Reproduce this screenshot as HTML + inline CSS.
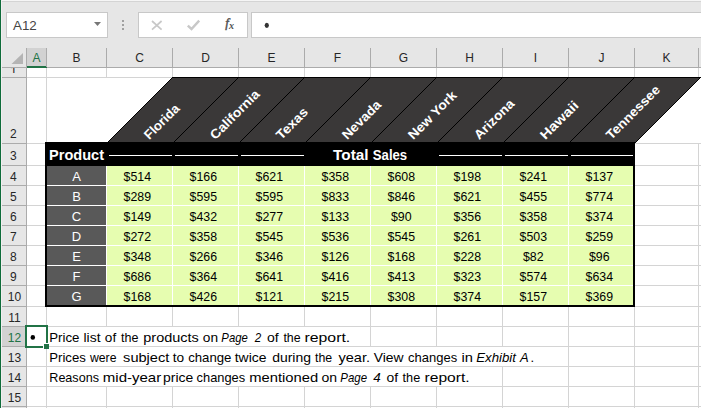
<!DOCTYPE html>
<html><head><meta charset="utf-8"><title>Sheet</title>
<style>
html,body{margin:0;padding:0;background:#fff;overflow:hidden}
svg{display:block}
svg rect,svg polygon.c{shape-rendering:crispEdges}
text{white-space:pre}
</style></head><body>
<svg width="701" height="408" viewBox="0 0 701 408">
<rect x="0" y="0" width="701" height="408" fill="#e6e6e6" />
<rect x="0" y="0" width="701" height="1" fill="#f5f5f5" />
<rect x="0" y="1" width="701" height="1" fill="#d4d4d4" />
<rect x="27" y="68" width="674" height="340" fill="#ffffff" />
<rect x="0" y="0" width="1" height="408" fill="#0f6c3a" />
<rect x="1" y="0" width="1" height="408" fill="#f2eef0" />
<rect x="6.5" y="12.5" width="101" height="25" fill="#ffffff" stroke="#c8c8c8" stroke-width="1"/>
<rect x="138.5" y="12.5" width="109" height="25" fill="#ffffff" stroke="#c8c8c8" stroke-width="1"/>
<rect x="251.5" y="12.5" width="460" height="25" fill="#ffffff" stroke="#c8c8c8" stroke-width="1"/>
<polygon points="94,22 101,22 97.5,26" fill="#777777"/>
<rect x="122" y="20.25" width="1.5" height="1.5" fill="#a0a0a0" />
<rect x="122" y="24.25" width="1.5" height="1.5" fill="#a0a0a0" />
<rect x="122" y="28.25" width="1.5" height="1.5" fill="#a0a0a0" />
<path d="M152 21 L161.6 29.6 M161.6 21 L152 29.6" stroke="#c8c8c8" stroke-width="1.7" fill="none"/>
<path d="M187.8 25.6 L191.5 29 L199.2 20.6" stroke="#c8c8c8" stroke-width="2.4" fill="none"/>
<text x="225.3" y="27.4" font-family="&quot;Liberation Serif&quot;, serif" font-style="italic" font-size="13" fill="#505050" stroke="#505050" stroke-width="0.45">f</text>
<text x="229" y="28.8" font-family="&quot;Liberation Serif&quot;, serif" font-style="italic" font-weight="bold" font-size="10" fill="#505050">x</text>
<ellipse cx="266.8" cy="25.3" rx="2.1" ry="2.6" fill="#333333"/>
<text id="t_a12" x="13.06" y="29.8" font-family='"Liberation Sans", sans-serif' font-size="12" font-weight="normal" font-style="normal" fill="#444444" text-anchor="start" textLength="23.73" lengthAdjust="spacingAndGlyphs">A12</text>
<rect x="27" y="48" width="19" height="19" fill="#d2d2d2" />
<rect x="2" y="67" width="699" height="1" fill="#ababab" />
<rect x="27" y="66" width="20" height="2" fill="#217346" />
<rect x="26" y="48" width="1" height="19" fill="#ababab" />
<rect x="46" y="48" width="1" height="19" fill="#ababab" />
<rect x="106" y="48" width="1" height="19" fill="#ababab" />
<rect x="172" y="48" width="1" height="19" fill="#ababab" />
<rect x="238" y="48" width="1" height="19" fill="#ababab" />
<rect x="304" y="48" width="1" height="19" fill="#ababab" />
<rect x="370" y="48" width="1" height="19" fill="#ababab" />
<rect x="436" y="48" width="1" height="19" fill="#ababab" />
<rect x="502" y="48" width="1" height="19" fill="#ababab" />
<rect x="568" y="48" width="1" height="19" fill="#ababab" />
<rect x="634" y="48" width="1" height="19" fill="#ababab" />
<rect x="698" y="48" width="1" height="19" fill="#ababab" />
<text x="36.5" y="62" text-anchor="middle" font-family='"Liberation Sans", sans-serif' font-size="12" fill="#217346">A</text>
<text x="76.5" y="62" text-anchor="middle" font-family='"Liberation Sans", sans-serif' font-size="12" fill="#262626">B</text>
<text x="139.5" y="62" text-anchor="middle" font-family='"Liberation Sans", sans-serif' font-size="12" fill="#262626">C</text>
<text x="205.5" y="62" text-anchor="middle" font-family='"Liberation Sans", sans-serif' font-size="12" fill="#262626">D</text>
<text x="271.5" y="62" text-anchor="middle" font-family='"Liberation Sans", sans-serif' font-size="12" fill="#262626">E</text>
<text x="337.5" y="62" text-anchor="middle" font-family='"Liberation Sans", sans-serif' font-size="12" fill="#262626">F</text>
<text x="403.5" y="62" text-anchor="middle" font-family='"Liberation Sans", sans-serif' font-size="12" fill="#262626">G</text>
<text x="469.5" y="62" text-anchor="middle" font-family='"Liberation Sans", sans-serif' font-size="12" fill="#262626">H</text>
<text x="535.5" y="62" text-anchor="middle" font-family='"Liberation Sans", sans-serif' font-size="12" fill="#262626">I</text>
<text x="601.5" y="62" text-anchor="middle" font-family='"Liberation Sans", sans-serif' font-size="12" fill="#262626">J</text>
<text x="666.5" y="62" text-anchor="middle" font-family='"Liberation Sans", sans-serif' font-size="12" fill="#262626">K</text>
<polygon points="23,53 23,64 11.5,64" fill="#b4b4b4"/>
<rect x="26" y="68" width="1" height="340" fill="#ababab" />
<rect x="2" y="327" width="24" height="19" fill="#d2d2d2" />
<rect x="2" y="77" width="24" height="1" fill="#ababab" />
<rect x="2" y="143" width="24" height="1" fill="#ababab" />
<rect x="2" y="165" width="24" height="1" fill="#ababab" />
<rect x="2" y="185" width="24" height="1" fill="#ababab" />
<rect x="2" y="205" width="24" height="1" fill="#ababab" />
<rect x="2" y="225" width="24" height="1" fill="#ababab" />
<rect x="2" y="245" width="24" height="1" fill="#ababab" />
<rect x="2" y="265" width="24" height="1" fill="#ababab" />
<rect x="2" y="285" width="24" height="1" fill="#ababab" />
<rect x="2" y="306" width="24" height="1" fill="#ababab" />
<rect x="2" y="326" width="24" height="1" fill="#ababab" />
<rect x="2" y="346" width="24" height="1" fill="#ababab" />
<rect x="2" y="366" width="24" height="1" fill="#ababab" />
<rect x="2" y="386" width="24" height="1" fill="#ababab" />
<rect x="2" y="406" width="24" height="1" fill="#ababab" />
<clipPath id="cl1"><rect x="0" y="68" width="26" height="5"/></clipPath>
<text x="13.5" y="74.5" text-anchor="middle" font-family='"Liberation Sans", sans-serif' font-size="12" fill="#262626" clip-path="url(#cl1)">1</text>
<text x="13.4" y="137.7" text-anchor="middle" font-family='"Liberation Sans", sans-serif' font-size="12" fill="#262626">2</text>
<text x="13.4" y="159.8" text-anchor="middle" font-family='"Liberation Sans", sans-serif' font-size="12" fill="#262626">3</text>
<text x="13.4" y="180.5" text-anchor="middle" font-family='"Liberation Sans", sans-serif' font-size="12" fill="#262626">4</text>
<text x="13.4" y="200.5" text-anchor="middle" font-family='"Liberation Sans", sans-serif' font-size="12" fill="#262626">5</text>
<text x="13.4" y="220.5" text-anchor="middle" font-family='"Liberation Sans", sans-serif' font-size="12" fill="#262626">6</text>
<text x="13.4" y="240.5" text-anchor="middle" font-family='"Liberation Sans", sans-serif' font-size="12" fill="#262626">7</text>
<text x="13.4" y="260.5" text-anchor="middle" font-family='"Liberation Sans", sans-serif' font-size="12" fill="#262626">8</text>
<text x="13.4" y="280.5" text-anchor="middle" font-family='"Liberation Sans", sans-serif' font-size="12" fill="#262626">9</text>
<text x="14.4" y="300.5" text-anchor="middle" font-family='"Liberation Sans", sans-serif' font-size="12" fill="#262626">10</text>
<text x="14.4" y="321.5" text-anchor="middle" font-family='"Liberation Sans", sans-serif' font-size="12" fill="#262626">11</text>
<text x="14.4" y="341.5" text-anchor="middle" font-family='"Liberation Sans", sans-serif' font-size="12" fill="#217346">12</text>
<text x="14.4" y="361.5" text-anchor="middle" font-family='"Liberation Sans", sans-serif' font-size="12" fill="#262626">13</text>
<text x="14.4" y="381.5" text-anchor="middle" font-family='"Liberation Sans", sans-serif' font-size="12" fill="#262626">14</text>
<text x="14.4" y="401.5" text-anchor="middle" font-family='"Liberation Sans", sans-serif' font-size="12" fill="#262626">15</text>
<rect x="27" y="77" width="674" height="1" fill="#d4d4d4" />
<rect x="27" y="143" width="674" height="1" fill="#d4d4d4" />
<rect x="27" y="165" width="674" height="1" fill="#d4d4d4" />
<rect x="27" y="185" width="674" height="1" fill="#d4d4d4" />
<rect x="27" y="205" width="674" height="1" fill="#d4d4d4" />
<rect x="27" y="225" width="674" height="1" fill="#d4d4d4" />
<rect x="27" y="245" width="674" height="1" fill="#d4d4d4" />
<rect x="27" y="265" width="674" height="1" fill="#d4d4d4" />
<rect x="27" y="285" width="674" height="1" fill="#d4d4d4" />
<rect x="27" y="306" width="674" height="1" fill="#d4d4d4" />
<rect x="27" y="326" width="674" height="1" fill="#d4d4d4" />
<rect x="27" y="346" width="674" height="1" fill="#d4d4d4" />
<rect x="27" y="366" width="674" height="1" fill="#d4d4d4" />
<rect x="27" y="386" width="674" height="1" fill="#d4d4d4" />
<rect x="27" y="406" width="674" height="1" fill="#d4d4d4" />
<rect x="46" y="68" width="1" height="340" fill="#d4d4d4" />
<rect x="106" y="68" width="1" height="340" fill="#d4d4d4" />
<rect x="172" y="68" width="1" height="340" fill="#d4d4d4" />
<rect x="238" y="68" width="1" height="340" fill="#d4d4d4" />
<rect x="304" y="68" width="1" height="340" fill="#d4d4d4" />
<rect x="370" y="68" width="1" height="340" fill="#d4d4d4" />
<rect x="436" y="68" width="1" height="340" fill="#d4d4d4" />
<rect x="502" y="68" width="1" height="340" fill="#d4d4d4" />
<rect x="568" y="68" width="1" height="340" fill="#d4d4d4" />
<rect x="634" y="68" width="1" height="340" fill="#d4d4d4" />
<rect x="698" y="68" width="1" height="340" fill="#d4d4d4" />
<rect x="106" y="78" width="1" height="65" fill="#ffffff" />
<rect x="698" y="78" width="1" height="65" fill="#ffffff" />
<rect x="106" y="327" width="1" height="19" fill="#ffffff" />
<rect x="172" y="327" width="1" height="19" fill="#ffffff" />
<rect x="238" y="327" width="1" height="19" fill="#ffffff" />
<rect x="304" y="327" width="1" height="19" fill="#ffffff" />
<rect x="106" y="347" width="1" height="19" fill="#ffffff" />
<rect x="172" y="347" width="1" height="19" fill="#ffffff" />
<rect x="238" y="347" width="1" height="19" fill="#ffffff" />
<rect x="304" y="347" width="1" height="19" fill="#ffffff" />
<rect x="370" y="347" width="1" height="19" fill="#ffffff" />
<rect x="436" y="347" width="1" height="19" fill="#ffffff" />
<rect x="502" y="347" width="1" height="19" fill="#ffffff" />
<rect x="106" y="367" width="1" height="19" fill="#ffffff" />
<rect x="172" y="367" width="1" height="19" fill="#ffffff" />
<rect x="238" y="367" width="1" height="19" fill="#ffffff" />
<rect x="304" y="367" width="1" height="19" fill="#ffffff" />
<rect x="370" y="367" width="1" height="19" fill="#ffffff" />
<rect x="436" y="367" width="1" height="19" fill="#ffffff" />
<polygon points="107,143 635,143 701,77 173,77" fill="#3a3838"/>
<rect x="172" y="77" width="529" height="1" fill="#000000" />
<path d="M107 142h1v1h-1zM108 141h1v1h-1zM109 140h1v1h-1zM110 139h1v1h-1zM111 138h1v1h-1zM112 137h1v1h-1zM113 136h1v1h-1zM114 135h1v1h-1zM115 134h1v1h-1zM116 133h1v1h-1zM117 132h1v1h-1zM118 131h1v1h-1zM119 130h1v1h-1zM120 129h1v1h-1zM121 128h1v1h-1zM122 127h1v1h-1zM123 126h1v1h-1zM124 125h1v1h-1zM125 124h1v1h-1zM126 123h1v1h-1zM127 122h1v1h-1zM128 121h1v1h-1zM129 120h1v1h-1zM130 119h1v1h-1zM131 118h1v1h-1zM132 117h1v1h-1zM133 116h1v1h-1zM134 115h1v1h-1zM135 114h1v1h-1zM136 113h1v1h-1zM137 112h1v1h-1zM138 111h1v1h-1zM139 110h1v1h-1zM140 109h1v1h-1zM141 108h1v1h-1zM142 107h1v1h-1zM143 106h1v1h-1zM144 105h1v1h-1zM145 104h1v1h-1zM146 103h1v1h-1zM147 102h1v1h-1zM148 101h1v1h-1zM149 100h1v1h-1zM150 99h1v1h-1zM151 98h1v1h-1zM152 97h1v1h-1zM153 96h1v1h-1zM154 95h1v1h-1zM155 94h1v1h-1zM156 93h1v1h-1zM157 92h1v1h-1zM158 91h1v1h-1zM159 90h1v1h-1zM160 89h1v1h-1zM161 88h1v1h-1zM162 87h1v1h-1zM163 86h1v1h-1zM164 85h1v1h-1zM165 84h1v1h-1zM166 83h1v1h-1zM167 82h1v1h-1zM168 81h1v1h-1zM169 80h1v1h-1zM170 79h1v1h-1zM171 78h1v1h-1zM172 77h1v1h-1z" fill="#000000" shape-rendering="crispEdges"/>
<path d="M173 142h1v1h-1zM174 141h1v1h-1zM175 140h1v1h-1zM176 139h1v1h-1zM177 138h1v1h-1zM178 137h1v1h-1zM179 136h1v1h-1zM180 135h1v1h-1zM181 134h1v1h-1zM182 133h1v1h-1zM183 132h1v1h-1zM184 131h1v1h-1zM185 130h1v1h-1zM186 129h1v1h-1zM187 128h1v1h-1zM188 127h1v1h-1zM189 126h1v1h-1zM190 125h1v1h-1zM191 124h1v1h-1zM192 123h1v1h-1zM193 122h1v1h-1zM194 121h1v1h-1zM195 120h1v1h-1zM196 119h1v1h-1zM197 118h1v1h-1zM198 117h1v1h-1zM199 116h1v1h-1zM200 115h1v1h-1zM201 114h1v1h-1zM202 113h1v1h-1zM203 112h1v1h-1zM204 111h1v1h-1zM205 110h1v1h-1zM206 109h1v1h-1zM207 108h1v1h-1zM208 107h1v1h-1zM209 106h1v1h-1zM210 105h1v1h-1zM211 104h1v1h-1zM212 103h1v1h-1zM213 102h1v1h-1zM214 101h1v1h-1zM215 100h1v1h-1zM216 99h1v1h-1zM217 98h1v1h-1zM218 97h1v1h-1zM219 96h1v1h-1zM220 95h1v1h-1zM221 94h1v1h-1zM222 93h1v1h-1zM223 92h1v1h-1zM224 91h1v1h-1zM225 90h1v1h-1zM226 89h1v1h-1zM227 88h1v1h-1zM228 87h1v1h-1zM229 86h1v1h-1zM230 85h1v1h-1zM231 84h1v1h-1zM232 83h1v1h-1zM233 82h1v1h-1zM234 81h1v1h-1zM235 80h1v1h-1zM236 79h1v1h-1zM237 78h1v1h-1zM238 77h1v1h-1z" fill="#000000" shape-rendering="crispEdges"/>
<path d="M239 142h1v1h-1zM240 141h1v1h-1zM241 140h1v1h-1zM242 139h1v1h-1zM243 138h1v1h-1zM244 137h1v1h-1zM245 136h1v1h-1zM246 135h1v1h-1zM247 134h1v1h-1zM248 133h1v1h-1zM249 132h1v1h-1zM250 131h1v1h-1zM251 130h1v1h-1zM252 129h1v1h-1zM253 128h1v1h-1zM254 127h1v1h-1zM255 126h1v1h-1zM256 125h1v1h-1zM257 124h1v1h-1zM258 123h1v1h-1zM259 122h1v1h-1zM260 121h1v1h-1zM261 120h1v1h-1zM262 119h1v1h-1zM263 118h1v1h-1zM264 117h1v1h-1zM265 116h1v1h-1zM266 115h1v1h-1zM267 114h1v1h-1zM268 113h1v1h-1zM269 112h1v1h-1zM270 111h1v1h-1zM271 110h1v1h-1zM272 109h1v1h-1zM273 108h1v1h-1zM274 107h1v1h-1zM275 106h1v1h-1zM276 105h1v1h-1zM277 104h1v1h-1zM278 103h1v1h-1zM279 102h1v1h-1zM280 101h1v1h-1zM281 100h1v1h-1zM282 99h1v1h-1zM283 98h1v1h-1zM284 97h1v1h-1zM285 96h1v1h-1zM286 95h1v1h-1zM287 94h1v1h-1zM288 93h1v1h-1zM289 92h1v1h-1zM290 91h1v1h-1zM291 90h1v1h-1zM292 89h1v1h-1zM293 88h1v1h-1zM294 87h1v1h-1zM295 86h1v1h-1zM296 85h1v1h-1zM297 84h1v1h-1zM298 83h1v1h-1zM299 82h1v1h-1zM300 81h1v1h-1zM301 80h1v1h-1zM302 79h1v1h-1zM303 78h1v1h-1zM304 77h1v1h-1z" fill="#000000" shape-rendering="crispEdges"/>
<path d="M305 142h1v1h-1zM306 141h1v1h-1zM307 140h1v1h-1zM308 139h1v1h-1zM309 138h1v1h-1zM310 137h1v1h-1zM311 136h1v1h-1zM312 135h1v1h-1zM313 134h1v1h-1zM314 133h1v1h-1zM315 132h1v1h-1zM316 131h1v1h-1zM317 130h1v1h-1zM318 129h1v1h-1zM319 128h1v1h-1zM320 127h1v1h-1zM321 126h1v1h-1zM322 125h1v1h-1zM323 124h1v1h-1zM324 123h1v1h-1zM325 122h1v1h-1zM326 121h1v1h-1zM327 120h1v1h-1zM328 119h1v1h-1zM329 118h1v1h-1zM330 117h1v1h-1zM331 116h1v1h-1zM332 115h1v1h-1zM333 114h1v1h-1zM334 113h1v1h-1zM335 112h1v1h-1zM336 111h1v1h-1zM337 110h1v1h-1zM338 109h1v1h-1zM339 108h1v1h-1zM340 107h1v1h-1zM341 106h1v1h-1zM342 105h1v1h-1zM343 104h1v1h-1zM344 103h1v1h-1zM345 102h1v1h-1zM346 101h1v1h-1zM347 100h1v1h-1zM348 99h1v1h-1zM349 98h1v1h-1zM350 97h1v1h-1zM351 96h1v1h-1zM352 95h1v1h-1zM353 94h1v1h-1zM354 93h1v1h-1zM355 92h1v1h-1zM356 91h1v1h-1zM357 90h1v1h-1zM358 89h1v1h-1zM359 88h1v1h-1zM360 87h1v1h-1zM361 86h1v1h-1zM362 85h1v1h-1zM363 84h1v1h-1zM364 83h1v1h-1zM365 82h1v1h-1zM366 81h1v1h-1zM367 80h1v1h-1zM368 79h1v1h-1zM369 78h1v1h-1zM370 77h1v1h-1z" fill="#000000" shape-rendering="crispEdges"/>
<path d="M371 142h1v1h-1zM372 141h1v1h-1zM373 140h1v1h-1zM374 139h1v1h-1zM375 138h1v1h-1zM376 137h1v1h-1zM377 136h1v1h-1zM378 135h1v1h-1zM379 134h1v1h-1zM380 133h1v1h-1zM381 132h1v1h-1zM382 131h1v1h-1zM383 130h1v1h-1zM384 129h1v1h-1zM385 128h1v1h-1zM386 127h1v1h-1zM387 126h1v1h-1zM388 125h1v1h-1zM389 124h1v1h-1zM390 123h1v1h-1zM391 122h1v1h-1zM392 121h1v1h-1zM393 120h1v1h-1zM394 119h1v1h-1zM395 118h1v1h-1zM396 117h1v1h-1zM397 116h1v1h-1zM398 115h1v1h-1zM399 114h1v1h-1zM400 113h1v1h-1zM401 112h1v1h-1zM402 111h1v1h-1zM403 110h1v1h-1zM404 109h1v1h-1zM405 108h1v1h-1zM406 107h1v1h-1zM407 106h1v1h-1zM408 105h1v1h-1zM409 104h1v1h-1zM410 103h1v1h-1zM411 102h1v1h-1zM412 101h1v1h-1zM413 100h1v1h-1zM414 99h1v1h-1zM415 98h1v1h-1zM416 97h1v1h-1zM417 96h1v1h-1zM418 95h1v1h-1zM419 94h1v1h-1zM420 93h1v1h-1zM421 92h1v1h-1zM422 91h1v1h-1zM423 90h1v1h-1zM424 89h1v1h-1zM425 88h1v1h-1zM426 87h1v1h-1zM427 86h1v1h-1zM428 85h1v1h-1zM429 84h1v1h-1zM430 83h1v1h-1zM431 82h1v1h-1zM432 81h1v1h-1zM433 80h1v1h-1zM434 79h1v1h-1zM435 78h1v1h-1zM436 77h1v1h-1z" fill="#000000" shape-rendering="crispEdges"/>
<path d="M437 142h1v1h-1zM438 141h1v1h-1zM439 140h1v1h-1zM440 139h1v1h-1zM441 138h1v1h-1zM442 137h1v1h-1zM443 136h1v1h-1zM444 135h1v1h-1zM445 134h1v1h-1zM446 133h1v1h-1zM447 132h1v1h-1zM448 131h1v1h-1zM449 130h1v1h-1zM450 129h1v1h-1zM451 128h1v1h-1zM452 127h1v1h-1zM453 126h1v1h-1zM454 125h1v1h-1zM455 124h1v1h-1zM456 123h1v1h-1zM457 122h1v1h-1zM458 121h1v1h-1zM459 120h1v1h-1zM460 119h1v1h-1zM461 118h1v1h-1zM462 117h1v1h-1zM463 116h1v1h-1zM464 115h1v1h-1zM465 114h1v1h-1zM466 113h1v1h-1zM467 112h1v1h-1zM468 111h1v1h-1zM469 110h1v1h-1zM470 109h1v1h-1zM471 108h1v1h-1zM472 107h1v1h-1zM473 106h1v1h-1zM474 105h1v1h-1zM475 104h1v1h-1zM476 103h1v1h-1zM477 102h1v1h-1zM478 101h1v1h-1zM479 100h1v1h-1zM480 99h1v1h-1zM481 98h1v1h-1zM482 97h1v1h-1zM483 96h1v1h-1zM484 95h1v1h-1zM485 94h1v1h-1zM486 93h1v1h-1zM487 92h1v1h-1zM488 91h1v1h-1zM489 90h1v1h-1zM490 89h1v1h-1zM491 88h1v1h-1zM492 87h1v1h-1zM493 86h1v1h-1zM494 85h1v1h-1zM495 84h1v1h-1zM496 83h1v1h-1zM497 82h1v1h-1zM498 81h1v1h-1zM499 80h1v1h-1zM500 79h1v1h-1zM501 78h1v1h-1zM502 77h1v1h-1z" fill="#000000" shape-rendering="crispEdges"/>
<path d="M503 142h1v1h-1zM504 141h1v1h-1zM505 140h1v1h-1zM506 139h1v1h-1zM507 138h1v1h-1zM508 137h1v1h-1zM509 136h1v1h-1zM510 135h1v1h-1zM511 134h1v1h-1zM512 133h1v1h-1zM513 132h1v1h-1zM514 131h1v1h-1zM515 130h1v1h-1zM516 129h1v1h-1zM517 128h1v1h-1zM518 127h1v1h-1zM519 126h1v1h-1zM520 125h1v1h-1zM521 124h1v1h-1zM522 123h1v1h-1zM523 122h1v1h-1zM524 121h1v1h-1zM525 120h1v1h-1zM526 119h1v1h-1zM527 118h1v1h-1zM528 117h1v1h-1zM529 116h1v1h-1zM530 115h1v1h-1zM531 114h1v1h-1zM532 113h1v1h-1zM533 112h1v1h-1zM534 111h1v1h-1zM535 110h1v1h-1zM536 109h1v1h-1zM537 108h1v1h-1zM538 107h1v1h-1zM539 106h1v1h-1zM540 105h1v1h-1zM541 104h1v1h-1zM542 103h1v1h-1zM543 102h1v1h-1zM544 101h1v1h-1zM545 100h1v1h-1zM546 99h1v1h-1zM547 98h1v1h-1zM548 97h1v1h-1zM549 96h1v1h-1zM550 95h1v1h-1zM551 94h1v1h-1zM552 93h1v1h-1zM553 92h1v1h-1zM554 91h1v1h-1zM555 90h1v1h-1zM556 89h1v1h-1zM557 88h1v1h-1zM558 87h1v1h-1zM559 86h1v1h-1zM560 85h1v1h-1zM561 84h1v1h-1zM562 83h1v1h-1zM563 82h1v1h-1zM564 81h1v1h-1zM565 80h1v1h-1zM566 79h1v1h-1zM567 78h1v1h-1zM568 77h1v1h-1z" fill="#000000" shape-rendering="crispEdges"/>
<path d="M569 142h1v1h-1zM570 141h1v1h-1zM571 140h1v1h-1zM572 139h1v1h-1zM573 138h1v1h-1zM574 137h1v1h-1zM575 136h1v1h-1zM576 135h1v1h-1zM577 134h1v1h-1zM578 133h1v1h-1zM579 132h1v1h-1zM580 131h1v1h-1zM581 130h1v1h-1zM582 129h1v1h-1zM583 128h1v1h-1zM584 127h1v1h-1zM585 126h1v1h-1zM586 125h1v1h-1zM587 124h1v1h-1zM588 123h1v1h-1zM589 122h1v1h-1zM590 121h1v1h-1zM591 120h1v1h-1zM592 119h1v1h-1zM593 118h1v1h-1zM594 117h1v1h-1zM595 116h1v1h-1zM596 115h1v1h-1zM597 114h1v1h-1zM598 113h1v1h-1zM599 112h1v1h-1zM600 111h1v1h-1zM601 110h1v1h-1zM602 109h1v1h-1zM603 108h1v1h-1zM604 107h1v1h-1zM605 106h1v1h-1zM606 105h1v1h-1zM607 104h1v1h-1zM608 103h1v1h-1zM609 102h1v1h-1zM610 101h1v1h-1zM611 100h1v1h-1zM612 99h1v1h-1zM613 98h1v1h-1zM614 97h1v1h-1zM615 96h1v1h-1zM616 95h1v1h-1zM617 94h1v1h-1zM618 93h1v1h-1zM619 92h1v1h-1zM620 91h1v1h-1zM621 90h1v1h-1zM622 89h1v1h-1zM623 88h1v1h-1zM624 87h1v1h-1zM625 86h1v1h-1zM626 85h1v1h-1zM627 84h1v1h-1zM628 83h1v1h-1zM629 82h1v1h-1zM630 81h1v1h-1zM631 80h1v1h-1zM632 79h1v1h-1zM633 78h1v1h-1zM634 77h1v1h-1z" fill="#000000" shape-rendering="crispEdges"/>
<path d="M635 142h1v1h-1zM636 141h1v1h-1zM637 140h1v1h-1zM638 139h1v1h-1zM639 138h1v1h-1zM640 137h1v1h-1zM641 136h1v1h-1zM642 135h1v1h-1zM643 134h1v1h-1zM644 133h1v1h-1zM645 132h1v1h-1zM646 131h1v1h-1zM647 130h1v1h-1zM648 129h1v1h-1zM649 128h1v1h-1zM650 127h1v1h-1zM651 126h1v1h-1zM652 125h1v1h-1zM653 124h1v1h-1zM654 123h1v1h-1zM655 122h1v1h-1zM656 121h1v1h-1zM657 120h1v1h-1zM658 119h1v1h-1zM659 118h1v1h-1zM660 117h1v1h-1zM661 116h1v1h-1zM662 115h1v1h-1zM663 114h1v1h-1zM664 113h1v1h-1zM665 112h1v1h-1zM666 111h1v1h-1zM667 110h1v1h-1zM668 109h1v1h-1zM669 108h1v1h-1zM670 107h1v1h-1zM671 106h1v1h-1zM672 105h1v1h-1zM673 104h1v1h-1zM674 103h1v1h-1zM675 102h1v1h-1zM676 101h1v1h-1zM677 100h1v1h-1zM678 99h1v1h-1zM679 98h1v1h-1zM680 97h1v1h-1zM681 96h1v1h-1zM682 95h1v1h-1zM683 94h1v1h-1zM684 93h1v1h-1zM685 92h1v1h-1zM686 91h1v1h-1zM687 90h1v1h-1zM688 89h1v1h-1zM689 88h1v1h-1zM690 87h1v1h-1zM691 86h1v1h-1zM692 85h1v1h-1zM693 84h1v1h-1zM694 83h1v1h-1zM695 82h1v1h-1zM696 81h1v1h-1zM697 80h1v1h-1zM698 79h1v1h-1zM699 78h1v1h-1zM700 77h1v1h-1z" fill="#000000" shape-rendering="crispEdges"/>
<rect x="45" y="142" width="590" height="165" fill="#000000" />
<rect x="47" y="166" width="59" height="19" fill="#595959" />
<rect x="107" y="166" width="526" height="19" fill="#e6fdb0" />
<rect x="47" y="186" width="59" height="19" fill="#595959" />
<rect x="107" y="186" width="526" height="19" fill="#e6fdb0" />
<rect x="47" y="206" width="59" height="19" fill="#595959" />
<rect x="107" y="206" width="526" height="19" fill="#e6fdb0" />
<rect x="47" y="226" width="59" height="19" fill="#595959" />
<rect x="107" y="226" width="526" height="19" fill="#e6fdb0" />
<rect x="47" y="246" width="59" height="19" fill="#595959" />
<rect x="107" y="246" width="526" height="19" fill="#e6fdb0" />
<rect x="47" y="266" width="59" height="19" fill="#595959" />
<rect x="107" y="266" width="526" height="19" fill="#e6fdb0" />
<rect x="47" y="286" width="59" height="19" fill="#595959" />
<rect x="107" y="286" width="526" height="19" fill="#e6fdb0" />
<rect x="47" y="185" width="586" height="1" fill="#ffffff" />
<rect x="47" y="205" width="586" height="1" fill="#ffffff" />
<rect x="47" y="225" width="586" height="1" fill="#ffffff" />
<rect x="47" y="245" width="586" height="1" fill="#ffffff" />
<rect x="47" y="265" width="586" height="1" fill="#ffffff" />
<rect x="47" y="285" width="586" height="1" fill="#ffffff" />
<rect x="106" y="166" width="1" height="139" fill="#ffffff" />
<rect x="172" y="166" width="1" height="139" fill="#ffffff" />
<rect x="238" y="166" width="1" height="139" fill="#ffffff" />
<rect x="304" y="166" width="1" height="139" fill="#ffffff" />
<rect x="370" y="166" width="1" height="139" fill="#ffffff" />
<rect x="436" y="166" width="1" height="139" fill="#ffffff" />
<rect x="502" y="166" width="1" height="139" fill="#ffffff" />
<rect x="568" y="166" width="1" height="139" fill="#ffffff" />
<rect x="108.5" y="154.5" width="63.5" height="1.2" fill="#ffffff" />
<rect x="175" y="154.5" width="63" height="1.2" fill="#ffffff" />
<rect x="241" y="154.5" width="63" height="1.2" fill="#ffffff" />
<rect x="439" y="154.5" width="63" height="1.2" fill="#ffffff" />
<rect x="505" y="154.5" width="63" height="1.2" fill="#ffffff" />
<rect x="571" y="154.5" width="62" height="1.2" fill="#ffffff" />
<text id="t_product" x="49.1" y="160.1" font-family='"Liberation Sans", sans-serif' font-size="14.2" font-weight="bold" font-style="normal" fill="#ffffff" text-anchor="start" textLength="54.98" lengthAdjust="spacingAndGlyphs">Product</text>
<text id="t_l0" x="76.5" y="180.5" font-family='"Liberation Sans", sans-serif' font-size="13" font-weight="normal" font-style="normal" fill="#ffffff" text-anchor="middle">A</text>
<text id="t_d0_0" x="137.3" y="180.5" font-family='"Liberation Sans", sans-serif' font-size="13.5" font-weight="normal" font-style="normal" fill="#000000" text-anchor="middle" textLength="27.47" lengthAdjust="spacingAndGlyphs">$514</text>
<text id="t_d0_1" x="203.3" y="180.5" font-family='"Liberation Sans", sans-serif' font-size="13.5" font-weight="normal" font-style="normal" fill="#000000" text-anchor="middle" textLength="27.47" lengthAdjust="spacingAndGlyphs">$166</text>
<text id="t_d0_2" x="269.3" y="180.5" font-family='"Liberation Sans", sans-serif' font-size="13.5" font-weight="normal" font-style="normal" fill="#000000" text-anchor="middle" textLength="27.47" lengthAdjust="spacingAndGlyphs">$621</text>
<text id="t_d0_3" x="335.3" y="180.5" font-family='"Liberation Sans", sans-serif' font-size="13.5" font-weight="normal" font-style="normal" fill="#000000" text-anchor="middle" textLength="27.47" lengthAdjust="spacingAndGlyphs">$358</text>
<text id="t_d0_4" x="401.3" y="180.5" font-family='"Liberation Sans", sans-serif' font-size="13.5" font-weight="normal" font-style="normal" fill="#000000" text-anchor="middle" textLength="27.47" lengthAdjust="spacingAndGlyphs">$608</text>
<text id="t_d0_5" x="467.3" y="180.5" font-family='"Liberation Sans", sans-serif' font-size="13.5" font-weight="normal" font-style="normal" fill="#000000" text-anchor="middle" textLength="27.47" lengthAdjust="spacingAndGlyphs">$198</text>
<text id="t_d0_6" x="533.3" y="180.5" font-family='"Liberation Sans", sans-serif' font-size="13.5" font-weight="normal" font-style="normal" fill="#000000" text-anchor="middle" textLength="27.47" lengthAdjust="spacingAndGlyphs">$241</text>
<text id="t_d0_7" x="599.3" y="180.5" font-family='"Liberation Sans", sans-serif' font-size="13.5" font-weight="normal" font-style="normal" fill="#000000" text-anchor="middle" textLength="27.47" lengthAdjust="spacingAndGlyphs">$137</text>
<text id="t_l1" x="76.5" y="200.5" font-family='"Liberation Sans", sans-serif' font-size="13" font-weight="normal" font-style="normal" fill="#ffffff" text-anchor="middle">B</text>
<text id="t_d1_0" x="137.3" y="200.5" font-family='"Liberation Sans", sans-serif' font-size="13.5" font-weight="normal" font-style="normal" fill="#000000" text-anchor="middle" textLength="27.47" lengthAdjust="spacingAndGlyphs">$289</text>
<text id="t_d1_1" x="203.3" y="200.5" font-family='"Liberation Sans", sans-serif' font-size="13.5" font-weight="normal" font-style="normal" fill="#000000" text-anchor="middle" textLength="27.47" lengthAdjust="spacingAndGlyphs">$595</text>
<text id="t_d1_2" x="269.3" y="200.5" font-family='"Liberation Sans", sans-serif' font-size="13.5" font-weight="normal" font-style="normal" fill="#000000" text-anchor="middle" textLength="27.47" lengthAdjust="spacingAndGlyphs">$595</text>
<text id="t_d1_3" x="335.3" y="200.5" font-family='"Liberation Sans", sans-serif' font-size="13.5" font-weight="normal" font-style="normal" fill="#000000" text-anchor="middle" textLength="27.47" lengthAdjust="spacingAndGlyphs">$833</text>
<text id="t_d1_4" x="401.3" y="200.5" font-family='"Liberation Sans", sans-serif' font-size="13.5" font-weight="normal" font-style="normal" fill="#000000" text-anchor="middle" textLength="27.47" lengthAdjust="spacingAndGlyphs">$846</text>
<text id="t_d1_5" x="467.3" y="200.5" font-family='"Liberation Sans", sans-serif' font-size="13.5" font-weight="normal" font-style="normal" fill="#000000" text-anchor="middle" textLength="27.47" lengthAdjust="spacingAndGlyphs">$621</text>
<text id="t_d1_6" x="533.3" y="200.5" font-family='"Liberation Sans", sans-serif' font-size="13.5" font-weight="normal" font-style="normal" fill="#000000" text-anchor="middle" textLength="27.47" lengthAdjust="spacingAndGlyphs">$455</text>
<text id="t_d1_7" x="599.3" y="200.5" font-family='"Liberation Sans", sans-serif' font-size="13.5" font-weight="normal" font-style="normal" fill="#000000" text-anchor="middle" textLength="27.47" lengthAdjust="spacingAndGlyphs">$774</text>
<text id="t_l2" x="76.5" y="220.5" font-family='"Liberation Sans", sans-serif' font-size="13" font-weight="normal" font-style="normal" fill="#ffffff" text-anchor="middle">C</text>
<text id="t_d2_0" x="137.3" y="220.5" font-family='"Liberation Sans", sans-serif' font-size="13.5" font-weight="normal" font-style="normal" fill="#000000" text-anchor="middle" textLength="27.47" lengthAdjust="spacingAndGlyphs">$149</text>
<text id="t_d2_1" x="203.3" y="220.5" font-family='"Liberation Sans", sans-serif' font-size="13.5" font-weight="normal" font-style="normal" fill="#000000" text-anchor="middle" textLength="27.47" lengthAdjust="spacingAndGlyphs">$432</text>
<text id="t_d2_2" x="269.3" y="220.5" font-family='"Liberation Sans", sans-serif' font-size="13.5" font-weight="normal" font-style="normal" fill="#000000" text-anchor="middle" textLength="27.47" lengthAdjust="spacingAndGlyphs">$277</text>
<text id="t_d2_3" x="335.3" y="220.5" font-family='"Liberation Sans", sans-serif' font-size="13.5" font-weight="normal" font-style="normal" fill="#000000" text-anchor="middle" textLength="27.47" lengthAdjust="spacingAndGlyphs">$133</text>
<text id="t_d2_4" x="401.3" y="220.5" font-family='"Liberation Sans", sans-serif' font-size="13.5" font-weight="normal" font-style="normal" fill="#000000" text-anchor="middle" textLength="20.61" lengthAdjust="spacingAndGlyphs">$90</text>
<text id="t_d2_5" x="467.3" y="220.5" font-family='"Liberation Sans", sans-serif' font-size="13.5" font-weight="normal" font-style="normal" fill="#000000" text-anchor="middle" textLength="27.47" lengthAdjust="spacingAndGlyphs">$356</text>
<text id="t_d2_6" x="533.3" y="220.5" font-family='"Liberation Sans", sans-serif' font-size="13.5" font-weight="normal" font-style="normal" fill="#000000" text-anchor="middle" textLength="27.47" lengthAdjust="spacingAndGlyphs">$358</text>
<text id="t_d2_7" x="599.3" y="220.5" font-family='"Liberation Sans", sans-serif' font-size="13.5" font-weight="normal" font-style="normal" fill="#000000" text-anchor="middle" textLength="27.47" lengthAdjust="spacingAndGlyphs">$374</text>
<text id="t_l3" x="76.5" y="240.5" font-family='"Liberation Sans", sans-serif' font-size="13" font-weight="normal" font-style="normal" fill="#ffffff" text-anchor="middle">D</text>
<text id="t_d3_0" x="137.3" y="240.5" font-family='"Liberation Sans", sans-serif' font-size="13.5" font-weight="normal" font-style="normal" fill="#000000" text-anchor="middle" textLength="27.47" lengthAdjust="spacingAndGlyphs">$272</text>
<text id="t_d3_1" x="203.3" y="240.5" font-family='"Liberation Sans", sans-serif' font-size="13.5" font-weight="normal" font-style="normal" fill="#000000" text-anchor="middle" textLength="27.47" lengthAdjust="spacingAndGlyphs">$358</text>
<text id="t_d3_2" x="269.3" y="240.5" font-family='"Liberation Sans", sans-serif' font-size="13.5" font-weight="normal" font-style="normal" fill="#000000" text-anchor="middle" textLength="27.47" lengthAdjust="spacingAndGlyphs">$545</text>
<text id="t_d3_3" x="335.3" y="240.5" font-family='"Liberation Sans", sans-serif' font-size="13.5" font-weight="normal" font-style="normal" fill="#000000" text-anchor="middle" textLength="27.47" lengthAdjust="spacingAndGlyphs">$536</text>
<text id="t_d3_4" x="401.3" y="240.5" font-family='"Liberation Sans", sans-serif' font-size="13.5" font-weight="normal" font-style="normal" fill="#000000" text-anchor="middle" textLength="27.47" lengthAdjust="spacingAndGlyphs">$545</text>
<text id="t_d3_5" x="467.3" y="240.5" font-family='"Liberation Sans", sans-serif' font-size="13.5" font-weight="normal" font-style="normal" fill="#000000" text-anchor="middle" textLength="27.47" lengthAdjust="spacingAndGlyphs">$261</text>
<text id="t_d3_6" x="533.3" y="240.5" font-family='"Liberation Sans", sans-serif' font-size="13.5" font-weight="normal" font-style="normal" fill="#000000" text-anchor="middle" textLength="27.47" lengthAdjust="spacingAndGlyphs">$503</text>
<text id="t_d3_7" x="599.3" y="240.5" font-family='"Liberation Sans", sans-serif' font-size="13.5" font-weight="normal" font-style="normal" fill="#000000" text-anchor="middle" textLength="27.47" lengthAdjust="spacingAndGlyphs">$259</text>
<text id="t_l4" x="76.5" y="260.5" font-family='"Liberation Sans", sans-serif' font-size="13" font-weight="normal" font-style="normal" fill="#ffffff" text-anchor="middle">E</text>
<text id="t_d4_0" x="137.3" y="260.5" font-family='"Liberation Sans", sans-serif' font-size="13.5" font-weight="normal" font-style="normal" fill="#000000" text-anchor="middle" textLength="27.47" lengthAdjust="spacingAndGlyphs">$348</text>
<text id="t_d4_1" x="203.3" y="260.5" font-family='"Liberation Sans", sans-serif' font-size="13.5" font-weight="normal" font-style="normal" fill="#000000" text-anchor="middle" textLength="27.47" lengthAdjust="spacingAndGlyphs">$266</text>
<text id="t_d4_2" x="269.3" y="260.5" font-family='"Liberation Sans", sans-serif' font-size="13.5" font-weight="normal" font-style="normal" fill="#000000" text-anchor="middle" textLength="27.47" lengthAdjust="spacingAndGlyphs">$346</text>
<text id="t_d4_3" x="335.3" y="260.5" font-family='"Liberation Sans", sans-serif' font-size="13.5" font-weight="normal" font-style="normal" fill="#000000" text-anchor="middle" textLength="27.47" lengthAdjust="spacingAndGlyphs">$126</text>
<text id="t_d4_4" x="401.3" y="260.5" font-family='"Liberation Sans", sans-serif' font-size="13.5" font-weight="normal" font-style="normal" fill="#000000" text-anchor="middle" textLength="27.47" lengthAdjust="spacingAndGlyphs">$168</text>
<text id="t_d4_5" x="467.3" y="260.5" font-family='"Liberation Sans", sans-serif' font-size="13.5" font-weight="normal" font-style="normal" fill="#000000" text-anchor="middle" textLength="27.47" lengthAdjust="spacingAndGlyphs">$228</text>
<text id="t_d4_6" x="533.3" y="260.5" font-family='"Liberation Sans", sans-serif' font-size="13.5" font-weight="normal" font-style="normal" fill="#000000" text-anchor="middle" textLength="20.61" lengthAdjust="spacingAndGlyphs">$82</text>
<text id="t_d4_7" x="599.3" y="260.5" font-family='"Liberation Sans", sans-serif' font-size="13.5" font-weight="normal" font-style="normal" fill="#000000" text-anchor="middle" textLength="20.61" lengthAdjust="spacingAndGlyphs">$96</text>
<text id="t_l5" x="76.5" y="280.5" font-family='"Liberation Sans", sans-serif' font-size="13" font-weight="normal" font-style="normal" fill="#ffffff" text-anchor="middle">F</text>
<text id="t_d5_0" x="137.3" y="280.5" font-family='"Liberation Sans", sans-serif' font-size="13.5" font-weight="normal" font-style="normal" fill="#000000" text-anchor="middle" textLength="27.47" lengthAdjust="spacingAndGlyphs">$686</text>
<text id="t_d5_1" x="203.3" y="280.5" font-family='"Liberation Sans", sans-serif' font-size="13.5" font-weight="normal" font-style="normal" fill="#000000" text-anchor="middle" textLength="27.47" lengthAdjust="spacingAndGlyphs">$364</text>
<text id="t_d5_2" x="269.3" y="280.5" font-family='"Liberation Sans", sans-serif' font-size="13.5" font-weight="normal" font-style="normal" fill="#000000" text-anchor="middle" textLength="27.47" lengthAdjust="spacingAndGlyphs">$641</text>
<text id="t_d5_3" x="335.3" y="280.5" font-family='"Liberation Sans", sans-serif' font-size="13.5" font-weight="normal" font-style="normal" fill="#000000" text-anchor="middle" textLength="27.47" lengthAdjust="spacingAndGlyphs">$416</text>
<text id="t_d5_4" x="401.3" y="280.5" font-family='"Liberation Sans", sans-serif' font-size="13.5" font-weight="normal" font-style="normal" fill="#000000" text-anchor="middle" textLength="27.47" lengthAdjust="spacingAndGlyphs">$413</text>
<text id="t_d5_5" x="467.3" y="280.5" font-family='"Liberation Sans", sans-serif' font-size="13.5" font-weight="normal" font-style="normal" fill="#000000" text-anchor="middle" textLength="27.47" lengthAdjust="spacingAndGlyphs">$323</text>
<text id="t_d5_6" x="533.3" y="280.5" font-family='"Liberation Sans", sans-serif' font-size="13.5" font-weight="normal" font-style="normal" fill="#000000" text-anchor="middle" textLength="27.47" lengthAdjust="spacingAndGlyphs">$574</text>
<text id="t_d5_7" x="599.3" y="280.5" font-family='"Liberation Sans", sans-serif' font-size="13.5" font-weight="normal" font-style="normal" fill="#000000" text-anchor="middle" textLength="27.47" lengthAdjust="spacingAndGlyphs">$634</text>
<text id="t_l6" x="76.5" y="300.5" font-family='"Liberation Sans", sans-serif' font-size="13" font-weight="normal" font-style="normal" fill="#ffffff" text-anchor="middle">G</text>
<text id="t_d6_0" x="137.3" y="300.5" font-family='"Liberation Sans", sans-serif' font-size="13.5" font-weight="normal" font-style="normal" fill="#000000" text-anchor="middle" textLength="27.47" lengthAdjust="spacingAndGlyphs">$168</text>
<text id="t_d6_1" x="203.3" y="300.5" font-family='"Liberation Sans", sans-serif' font-size="13.5" font-weight="normal" font-style="normal" fill="#000000" text-anchor="middle" textLength="27.47" lengthAdjust="spacingAndGlyphs">$426</text>
<text id="t_d6_2" x="269.3" y="300.5" font-family='"Liberation Sans", sans-serif' font-size="13.5" font-weight="normal" font-style="normal" fill="#000000" text-anchor="middle" textLength="27.47" lengthAdjust="spacingAndGlyphs">$121</text>
<text id="t_d6_3" x="335.3" y="300.5" font-family='"Liberation Sans", sans-serif' font-size="13.5" font-weight="normal" font-style="normal" fill="#000000" text-anchor="middle" textLength="27.47" lengthAdjust="spacingAndGlyphs">$215</text>
<text id="t_d6_4" x="401.3" y="300.5" font-family='"Liberation Sans", sans-serif' font-size="13.5" font-weight="normal" font-style="normal" fill="#000000" text-anchor="middle" textLength="27.47" lengthAdjust="spacingAndGlyphs">$308</text>
<text id="t_d6_5" x="467.3" y="300.5" font-family='"Liberation Sans", sans-serif' font-size="13.5" font-weight="normal" font-style="normal" fill="#000000" text-anchor="middle" textLength="27.47" lengthAdjust="spacingAndGlyphs">$374</text>
<text id="t_d6_6" x="533.3" y="300.5" font-family='"Liberation Sans", sans-serif' font-size="13.5" font-weight="normal" font-style="normal" fill="#000000" text-anchor="middle" textLength="27.47" lengthAdjust="spacingAndGlyphs">$157</text>
<text id="t_d6_7" x="599.3" y="300.5" font-family='"Liberation Sans", sans-serif' font-size="13.5" font-weight="normal" font-style="normal" fill="#000000" text-anchor="middle" textLength="27.47" lengthAdjust="spacingAndGlyphs">$369</text>
<text id="t_s0" transform="translate(149.3,140.3) rotate(-45)" font-family='"Liberation Sans", sans-serif' font-size="13" font-weight="bold" fill="#ffffff" textLength="43.99" lengthAdjust="spacingAndGlyphs">Florida</text>
<text id="t_s1" transform="translate(215.3,140.3) rotate(-45)" font-family='"Liberation Sans", sans-serif' font-size="13" font-weight="bold" fill="#ffffff" textLength="63.94" lengthAdjust="spacingAndGlyphs">California</text>
<text id="t_s2" transform="translate(281.3,140.3) rotate(-45)" font-family='"Liberation Sans", sans-serif' font-size="13" font-weight="bold" fill="#ffffff" textLength="38.85" lengthAdjust="spacingAndGlyphs">Texas</text>
<text id="t_s3" transform="translate(347.3,140.3) rotate(-45)" font-family='"Liberation Sans", sans-serif' font-size="13" font-weight="bold" fill="#ffffff" textLength="49.1" lengthAdjust="spacingAndGlyphs">Nevada</text>
<text id="t_s4" transform="translate(413.3,140.3) rotate(-45)" font-family='"Liberation Sans", sans-serif' font-size="13" font-weight="bold" fill="#ffffff" textLength="62.47" lengthAdjust="spacingAndGlyphs">New York</text>
<text id="t_s5" transform="translate(479.3,140.3) rotate(-45)" font-family='"Liberation Sans", sans-serif' font-size="13" font-weight="bold" fill="#ffffff" textLength="50.62" lengthAdjust="spacingAndGlyphs">Arizona</text>
<text id="t_s6" transform="translate(545.3,140.3) rotate(-45)" font-family='"Liberation Sans", sans-serif' font-size="13" font-weight="bold" fill="#ffffff" textLength="48.3" lengthAdjust="spacingAndGlyphs">Hawaii</text>
<text id="t_s7" transform="translate(611.3,140.3) rotate(-45)" font-family='"Liberation Sans", sans-serif' font-size="13" font-weight="bold" fill="#ffffff" textLength="70.16" lengthAdjust="spacingAndGlyphs">Tennessee</text>
<text y="342" font-family='"Liberation Sans", sans-serif' font-size="13" fill="#000000"><tspan x="49.27" textLength="30.21" lengthAdjust="spacingAndGlyphs">Price</tspan> <tspan x="83.49" textLength="17.01" lengthAdjust="spacingAndGlyphs">list</tspan> <tspan x="104.86" textLength="11.32" lengthAdjust="spacingAndGlyphs">of</tspan> <tspan x="120.99" textLength="17.37" lengthAdjust="spacingAndGlyphs">the</tspan> <tspan x="143.29" textLength="55.5" lengthAdjust="spacingAndGlyphs">products</tspan> <tspan x="202.86" textLength="15.24" lengthAdjust="spacingAndGlyphs">on</tspan> <tspan x="221.35" font-style="italic" textLength="26.44" lengthAdjust="spacingAndGlyphs">Page</tspan> <tspan x="254.83" font-style="italic" textLength="6.44" lengthAdjust="spacingAndGlyphs">2</tspan> <tspan x="266.95" textLength="11.69" lengthAdjust="spacingAndGlyphs">of</tspan> <tspan x="283.43" textLength="17.17" lengthAdjust="spacingAndGlyphs">the</tspan> <tspan x="304.53" textLength="45.67" lengthAdjust="spacingAndGlyphs">report.</tspan></text>
<text y="362" font-family='"Liberation Sans", sans-serif' font-size="13" fill="#000000"><tspan x="49.28" textLength="36.6" lengthAdjust="spacingAndGlyphs">Prices</tspan> <tspan x="89.97" textLength="26.49" lengthAdjust="spacingAndGlyphs">were</tspan> <tspan x="123.08" textLength="46.27" lengthAdjust="spacingAndGlyphs">subject</tspan> <tspan x="172.68" textLength="11.39" lengthAdjust="spacingAndGlyphs">to</tspan> <tspan x="188.18" textLength="43.27" lengthAdjust="spacingAndGlyphs">change</tspan> <tspan x="234.74" textLength="31.66" lengthAdjust="spacingAndGlyphs">twice</tspan> <tspan x="272.18" textLength="38.76" lengthAdjust="spacingAndGlyphs">during</tspan> <tspan x="314.99" textLength="17.16" lengthAdjust="spacingAndGlyphs">the</tspan> <tspan x="338.53" textLength="31.49" lengthAdjust="spacingAndGlyphs">year.</tspan> <tspan x="373.71" textLength="29.86" lengthAdjust="spacingAndGlyphs">View</tspan> <tspan x="408.09" textLength="49.05" lengthAdjust="spacingAndGlyphs">changes</tspan> <tspan x="461.46" textLength="11.42" lengthAdjust="spacingAndGlyphs">in</tspan> <tspan x="476.26" font-style="italic" textLength="39.73" lengthAdjust="spacingAndGlyphs">Exhibit</tspan> <tspan x="519.94" font-style="italic" textLength="8.67" lengthAdjust="spacingAndGlyphs">A</tspan> <tspan x="530.51" textLength="3.62" lengthAdjust="spacingAndGlyphs">.</tspan></text>
<text y="160.1" font-family='"Liberation Sans", sans-serif' font-size="14.2" font-weight="bold" fill="#ffffff"><tspan x="333.12" textLength="35.5" lengthAdjust="spacingAndGlyphs">Total</tspan> <tspan x="372.81" textLength="34.37" lengthAdjust="spacingAndGlyphs">Sales</tspan></text>
<text y="382" font-family='"Liberation Sans", sans-serif' font-size="13" fill="#000000"><tspan x="49.31" textLength="49.64" lengthAdjust="spacingAndGlyphs">Reasons</tspan> <tspan x="102.82" textLength="58.42" lengthAdjust="spacingAndGlyphs">mid-year</tspan> <tspan x="163.11" textLength="30.22" lengthAdjust="spacingAndGlyphs">price</tspan> <tspan x="196.6" textLength="48.6" lengthAdjust="spacingAndGlyphs">changes</tspan> <tspan x="249.27" textLength="68.93" lengthAdjust="spacingAndGlyphs">mentioned</tspan> <tspan x="321.55" textLength="15.61" lengthAdjust="spacingAndGlyphs">on</tspan> <tspan x="340.34" font-style="italic" textLength="26.77" lengthAdjust="spacingAndGlyphs">Page</tspan> <tspan x="373.31" font-style="italic" textLength="7.46" lengthAdjust="spacingAndGlyphs">4</tspan> <tspan x="386.56" textLength="11.56" lengthAdjust="spacingAndGlyphs">of</tspan> <tspan x="402.58" textLength="17.64" lengthAdjust="spacingAndGlyphs">the</tspan> <tspan x="424.54" textLength="45.07" lengthAdjust="spacingAndGlyphs">report.</tspan></text>
<rect x="26" y="326" width="21" height="21" fill="none" stroke="#217346" stroke-width="2"/>
<rect x="43" y="343" width="6" height="6" fill="#ffffff" />
<rect x="44" y="344" width="5" height="5" fill="#217346" />
<ellipse cx="32.8" cy="337.4" rx="2.25" ry="2.45" fill="#000000"/>
</svg>
</body></html>
